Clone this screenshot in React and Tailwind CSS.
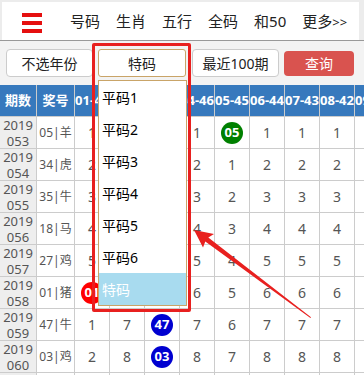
import React from 'react';

const cols = ['01-49', '02-48', '03-47', '04-46', '05-45', '06-44', '07-43', '08-42', '09-41'];

const rows = [
  ['053', '05|羊', [1, 1, 1, 1, ['05', 'g'], 1, 1, 1, 1]],
  ['054', '34|虎', [2, 2, 2, 2, 1, 2, 2, 2, 2]],
  ['055', '35|牛', [3, 3, 3, 3, 2, 3, 3, 3, 3]],
  ['056', '18|马', [4, 4, 4, 4, 3, 4, 4, 4, 4]],
  ['057', '27|鸡', [5, 5, 5, 5, 4, 5, 5, 5, 5]],
  ['058', '01|猪', [['01', 'r'], 6, 6, 6, 5, 6, 6, 6, 6]],
  ['059', '47|牛', [1, 7, ['47', 'b'], 7, 6, 7, 7, 7, 7]],
  ['060', '03|鸡', [2, 8, ['03', 'b'], 8, 7, 8, 8, 8, 8]],
  ['061', '22|蛇', [3, 9, 1, 9, 8, 9, 9, 9, 9]],
];

function Ball({ label, c }) {
  const bg = c === 'g' ? 'bg-[#008000]' : c === 'r' ? 'bg-[#ff0000]' : 'bg-[#0000d0]';
  return (
    <span className={`w-[22px] h-[22px] rounded-full ${bg} text-white font-bold text-[13px] leading-none flex items-center justify-center`}>
      {label}
    </span>
  );
}

const cell = 'h-[32px] border-r border-b border-[#ccc] flex items-center justify-center overflow-hidden';

export default function App() {
  return (
    <div className="w-[364px] h-[375px] overflow-hidden relative bg-white font-['Noto_Sans','Noto_Sans_CJK_SC',sans-serif]">
      {/* top nav */}
      <div className="bg-[#ececec] pt-[2px] pl-[2px] pr-[5px] border-b border-[#999]">
        <div className="h-[38px] bg-white flex items-center pl-[20px]">
          <div className="flex flex-col gap-[4px] mt-[4px]">
            <span className="block w-[20px] h-[4px] bg-[#e50f0f]" />
            <span className="block w-[20px] h-[4px] bg-[#e50f0f]" />
            <span className="block w-[20px] h-[4px] bg-[#e50f0f]" />
          </div>
          <nav className="flex items-center ml-[28px] gap-[16px] text-[15px] text-[#222] leading-none">
            <span>号码</span>
            <span>生肖</span>
            <span>五行</span>
            <span>全码</span>
            <span>和50</span>
            <span>更多<span className="text-[13px]">&gt;&gt;</span></span>
          </nav>
        </div>
      </div>

      {/* filter row */}
      <div className="h-[44px] bg-[#f3f3f3] flex items-center text-[14px]">
        <button className="ml-[6px] w-[87px] h-[28px] bg-white border border-[#ccc] rounded-[4px] text-[#222] flex items-center justify-center">不选年份</button>
        <button className="ml-[5px] w-[88px] h-[28px] bg-white border border-[#c9a468] rounded-[3px] text-[#222] flex items-center justify-center">特码</button>
        <button className="ml-[6px] w-[87px] h-[28px] bg-white border border-[#ccc] rounded-[4px] text-[#222] flex items-center justify-center">最近100期</button>
        <button className="ml-[5px] w-[70px] h-[25px] bg-[#d9534f] rounded-[4px] text-white flex items-center justify-center">查询</button>
      </div>

      {/* table */}
      <div className="w-[390px]">
        <div className="grid grid-cols-[37px_38px_repeat(9,35px)] bg-[#3779bd] text-white font-bold text-[13px]">
          <div className={cell}>期数</div>
          <div className={cell}>奖号</div>
          {cols.map((c) => (
            <div key={c} className={`${cell} whitespace-nowrap`}>{c}</div>
          ))}
        </div>
        {rows.map(([q, n, vals]) => (
          <div key={q} className="grid grid-cols-[37px_38px_repeat(9,35px)] text-[#555] text-[14px]">
            <div className={`${cell} bg-[#eee] flex-col leading-[16px] text-[13px]`}>
              <span>2019</span>
              <span>{q}</span>
            </div>
            <div className={`${cell} text-[12px] whitespace-nowrap`}>{n}</div>
            {vals.map((v, i) => (
              <div key={i} className={cell}>
                {Array.isArray(v) ? <Ball label={v[0]} c={v[1]} /> : v}
              </div>
            ))}
          </div>
        ))}
      </div>

      {/* dropdown list */}
      <div className="absolute left-[98px] top-[80px] w-[89px] bg-white border border-[#c9a468] text-[14px] text-black">
        {['平码1', '平码2', '平码3', '平码4', '平码5', '平码6'].map((t) => (
          <div key={t} className="h-[32px] flex items-center pl-[3px]">{t}</div>
        ))}
        <div className="h-[32px] flex items-center pl-[3px] bg-[#a8dbef] text-white">特码</div>
      </div>

      {/* red annotation box */}
      <div className="absolute left-[92px] top-[43px] w-[99px] h-[269px] border-[3px] border-[#e8201f] rounded-[2px]" />

      {/* red arrow */}
      <svg className="absolute left-0 top-0 pointer-events-none" width="364" height="375" viewBox="0 0 364 375">
        <polygon
          points="194,230 214,234 208.3,237.6 311,317.3 310.4,318.1 205.3,241.6 203,247.5"
          fill="#e8201f"
        />
      </svg>
    </div>
  );
}
